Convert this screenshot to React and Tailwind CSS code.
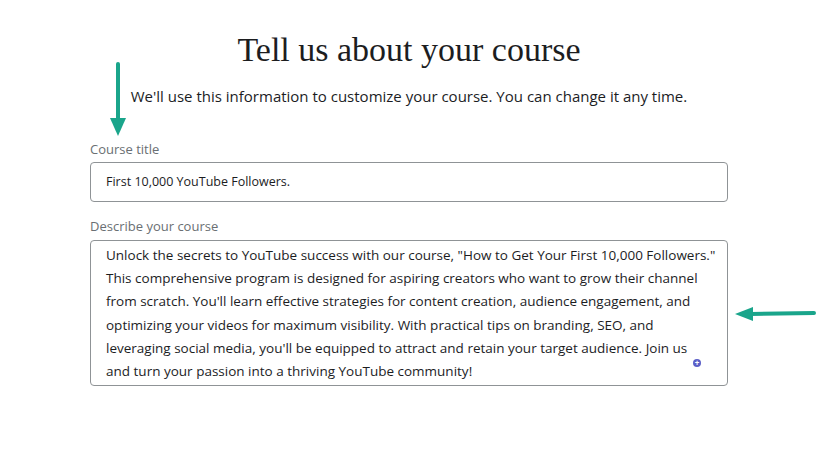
import React from 'react';

const description = [
  'Unlock the secrets to YouTube success with our course, "How to Get Your First 10,000 Followers."',
  'This comprehensive program is designed for aspiring creators who want to grow their channel',
  "from scratch. You'll learn effective strategies for content creation, audience engagement, and",
  'optimizing your videos for maximum visibility. With practical tips on branding, SEO, and',
  "leveraging social media, you'll be equipped to attract and retain your target audience. Join us",
  'and turn your passion into a thriving YouTube community!',
];

// annotation arrows drawn over the screenshot
function DownArrow() {
  return (
    <svg width="20" height="78" viewBox="0 0 20 78" className="absolute left-[108px] top-[60px]">
      <line x1="10" y1="4" x2="10" y2="60" stroke="#1aa58b" strokeWidth="4" strokeLinecap="round" />
      <polygon points="2,58 18,58 10,76" fill="#1aa58b" />
    </svg>
  );
}

function LeftArrow() {
  return (
    <svg width="86" height="20" viewBox="0 0 86 20" className="absolute left-[733px] top-[304px]">
      <line x1="18" y1="10" x2="81" y2="9" stroke="#1aa58b" strokeWidth="4" strokeLinecap="round" />
      <polygon points="2,10 20,3 20,17" fill="#1aa58b" />
    </svg>
  );
}

export default function App() {
  return (
    <div className="relative w-[828px] h-[463px] bg-white overflow-hidden font-['Open_Sans',sans-serif] text-[#1c1d1f]">
      <div className="flex flex-col ml-[90px] w-[638px] pt-[30px]">
        <div className="flex flex-col items-center gap-[16px]">
          <h1 className="font-['Liberation_Serif',serif] text-[34px] leading-[40px] text-[#1c1d1f]">
            Tell us about your course
          </h1>
          <p className="text-[15px] leading-[20px] text-[#1c1d1f]">
            We'll use this information to customize your course. You can change it any time.
          </p>
        </div>

        <div className="flex flex-col gap-[4px] mt-[34px]">
          <label className="text-[13px] leading-[18px] text-[#6a6f73]">Course title</label>
          <div className="h-[40px] flex items-center px-[15px] border border-[#8f9396] rounded-[4px] text-[12.5px] text-[#1c1d1f]">
            First 10,000 YouTube Followers.
          </div>
        </div>

        <div className="flex flex-col gap-[5px] mt-[15px]">
          <label className="text-[13px] leading-[18px] text-[#6a6f73]">Describe your course</label>
          <div className="relative flex flex-col h-[146px] border border-[#8f9396] rounded-[4px] px-[15px] pt-[3px]">
            {description.map((line, i) => (
              <div key={i} className="whitespace-nowrap text-[13.5px] leading-[23.2px] text-[#1c1d1f]">
                {line}
              </div>
            ))}
            <span className="absolute right-[26px] bottom-[18px] w-[8px] h-[8px] rounded-full bg-[#5b5fc7] flex items-center justify-center text-white text-[8px] leading-none font-bold">
              +
            </span>
          </div>
        </div>
      </div>

      <DownArrow />
      <LeftArrow />
    </div>
  );
}
